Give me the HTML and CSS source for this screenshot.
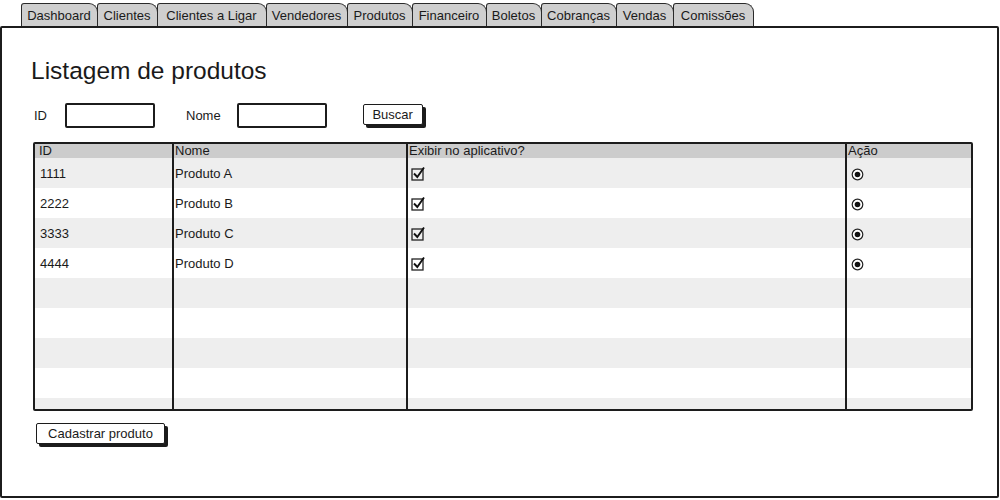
FILE: index.html
```html
<!DOCTYPE html>
<html lang="pt">
<head>
<meta charset="utf-8">
<title>Listagem de produtos</title>
<link rel="stylesheet" href="styles.css">
</head>
<body>
<nav class="tabs">
  <span class="tab">Dashboard</span>
  <span class="tab">Clientes</span>
  <span class="tab">Clientes a Ligar</span>
  <span class="tab">Vendedores</span>
  <span class="tab active">Produtos</span>
  <span class="tab">Financeiro</span>
  <span class="tab">Boletos</span>
  <span class="tab">Cobranças</span>
  <span class="tab">Vendas</span>
  <span class="tab">Comissões</span>
</nav>
<main class="panel">
  <h1 class="title">Listagem de produtos</h1>
  <div class="filters">
    <label class="lbl lbl-id">ID</label>
    <span class="input input-id"></span>
    <label class="lbl lbl-nome">Nome</label>
    <span class="input input-nome"></span>
    <button class="btn btn-buscar">Buscar</button>
  </div>
  <div class="table-wrap">
    <table class="grid">
      <colgroup>
        <col class="c1"><col class="c2"><col class="c3"><col class="c4">
      </colgroup>
      <thead>
        <tr><th class="first">ID</th><th>Nome</th><th>Exibir no aplicativo?</th><th class="last">Ação</th></tr>
      </thead>
      <tbody>
        <tr><td class="first">1111</td><td>Produto A</td><td><svg class="chk" width="15" height="15" viewBox="0 0 15 15"><rect x="1" y="3" width="11" height="11" fill="none" stroke="#222" stroke-width="1.3"/><path d="M3 7.5 L6.3 11 L13 1.5" fill="none" stroke="#111" stroke-width="1.9"/></svg></td><td class="last"><svg class="radio" width="13" height="13" viewBox="0 0 13 13"><circle cx="6.5" cy="6.5" r="5.3" fill="#fff" stroke="#222" stroke-width="1.2"/><circle cx="6.5" cy="6.5" r="2.8" fill="#111"/></svg></td></tr>
        <tr><td class="first">2222</td><td>Produto B</td><td><svg class="chk" width="15" height="15" viewBox="0 0 15 15"><rect x="1" y="3" width="11" height="11" fill="none" stroke="#222" stroke-width="1.3"/><path d="M3 7.5 L6.3 11 L13 1.5" fill="none" stroke="#111" stroke-width="1.9"/></svg></td><td class="last"><svg class="radio" width="13" height="13" viewBox="0 0 13 13"><circle cx="6.5" cy="6.5" r="5.3" fill="#fff" stroke="#222" stroke-width="1.2"/><circle cx="6.5" cy="6.5" r="2.8" fill="#111"/></svg></td></tr>
        <tr><td class="first">3333</td><td>Produto C</td><td><svg class="chk" width="15" height="15" viewBox="0 0 15 15"><rect x="1" y="3" width="11" height="11" fill="none" stroke="#222" stroke-width="1.3"/><path d="M3 7.5 L6.3 11 L13 1.5" fill="none" stroke="#111" stroke-width="1.9"/></svg></td><td class="last"><svg class="radio" width="13" height="13" viewBox="0 0 13 13"><circle cx="6.5" cy="6.5" r="5.3" fill="#fff" stroke="#222" stroke-width="1.2"/><circle cx="6.5" cy="6.5" r="2.8" fill="#111"/></svg></td></tr>
        <tr><td class="first">4444</td><td>Produto D</td><td><svg class="chk" width="15" height="15" viewBox="0 0 15 15"><rect x="1" y="3" width="11" height="11" fill="none" stroke="#222" stroke-width="1.3"/><path d="M3 7.5 L6.3 11 L13 1.5" fill="none" stroke="#111" stroke-width="1.9"/></svg></td><td class="last"><svg class="radio" width="13" height="13" viewBox="0 0 13 13"><circle cx="6.5" cy="6.5" r="5.3" fill="#fff" stroke="#222" stroke-width="1.2"/><circle cx="6.5" cy="6.5" r="2.8" fill="#111"/></svg></td></tr>
        <tr><td class="first"></td><td></td><td></td><td class="last"></td></tr>
        <tr><td class="first"></td><td></td><td></td><td class="last"></td></tr>
        <tr><td class="first"></td><td></td><td></td><td class="last"></td></tr>
        <tr><td class="first"></td><td></td><td></td><td class="last"></td></tr>
        <tr class="partial"><td class="first"></td><td></td><td></td><td class="last"></td></tr>
      </tbody>
    </table>
  </div>
  <button class="btn btn-cadastrar">Cadastrar produto</button>
</main>
</body>
</html>
```

FILE: styles.css
```css
* { box-sizing: border-box; }

html, body {
  margin: 0;
  padding: 0;
  background: #fff;
}

body {
  font-family: "Liberation Sans", Arial, sans-serif;
  color: #1e1e1e;
  width: 1000px;
  height: 500px;
  overflow: hidden;
}

/* Tabs */
.tabs {
  display: flex;
  height: 26px;
  padding: 3px 0 0 21px;
}

.tab {
  display: flex;
  align-items: center;
  justify-content: center;
  height: 23px;
  padding: 1px 3px 0 2px;
  margin-right: -1px;
  background: #cfcfcf;
  border: 1px solid #2a2a2a;
  border-bottom: none;
  border-radius: 3px 9px 0 0;
  font-size: 13px;
  color: #1a1a1a;
  white-space: nowrap;
}

.tab:nth-child(1)  { width: 77px; }
.tab:nth-child(2)  { width: 61px; }
.tab:nth-child(3)  { width: 110px; }
.tab:nth-child(4)  { width: 82px; }
.tab:nth-child(5)  { width: 66px; }
.tab:nth-child(6)  { width: 75px; }
.tab:nth-child(7)  { width: 56px; }
.tab:nth-child(8)  { width: 76px; }
.tab:nth-child(9)  { width: 58px; }
.tab:nth-child(10) { width: 81px; }

/* Panel */
.panel {
  width: 999px;
  height: 472px;
  border: 2px solid #1c1c1c;
  border-radius: 2px;
  padding: 29px 0 0 29px;
}

.title {
  margin: 0;
  font-weight: normal;
  font-size: 24.5px;
  line-height: 28px;
  color: #1a1a1a;
}

.filters {
  display: flex;
  align-items: center;
  height: 25px;
  margin-top: 18px;
}

.lbl {
  font-size: 13px;
  color: #1a1a1a;
}

.lbl-id { margin-left: 3px; margin-right: 18px; }
.lbl-nome { margin-left: 31px; margin-right: 16px; }

.input {
  display: block;
  width: 90px;
  height: 25px;
  border: 2px solid #1c1c1c;
  border-radius: 2px;
  background: #fff;
}

.btn {
  font-family: "Liberation Sans", Arial, sans-serif;
  font-size: 13px;
  color: #1a1a1a;
  background: #fff;
  border: 1.5px solid #1c1c1c;
  border-radius: 2px;
  box-shadow: 3px 3px 0 #1c1c1c;
  padding: 0;
  cursor: pointer;
}

.btn-buscar {
  margin-left: 36px;
  width: 60px;
  height: 21px;
  margin-top: -2px;
}

/* Table */
.table-wrap {
  margin: 14px 0 0 2px;
  width: 940px;
  height: 269px;
  border: 2px solid #1c1c1c;
  border-radius: 2px;
  overflow: hidden;
  background: #eeeeee;
}

.grid {
  width: 936px;
  border-collapse: separate;
  border-spacing: 0;
  table-layout: fixed;
  font-size: 13px;
}

.c1 { width: 139px; }
.c2 { width: 234px; }
.c3 { width: 439px; }
.c4 { width: 124px; }

.grid th,
.grid td {
  border-right: 2px solid #1c1c1c;
  padding: 0 0 0 1px;
  text-align: left;
  white-space: nowrap;
  overflow: hidden;
}

.grid th.last,
.grid td.last { border-right: none; }

.grid th {
  height: 14px;
  line-height: 14px;
  font-weight: normal;
  background: #cccccc;
  color: #1a1a1a;
}

.grid th.first { padding-left: 4px; }

.grid td {
  height: 30px;
  vertical-align: middle;
  color: #1a1a1a;
}

.grid td.first { padding-left: 5px; }

.grid tbody tr:nth-child(odd) { background: #eeeeee; }
.grid tbody tr:nth-child(even) { background: #ffffff; }

.grid tbody tr.partial td { height: 14px; }

.chk {
  display: block;
  margin: 1px 0 0 2px;
}

.radio {
  display: block;
  margin: 2px 0 0 3px;
}

.btn-cadastrar {
  display: block;
  margin: 12px 0 0 5px;
  width: 129px;
  height: 21px;
  font-size: 13px;
}
```
